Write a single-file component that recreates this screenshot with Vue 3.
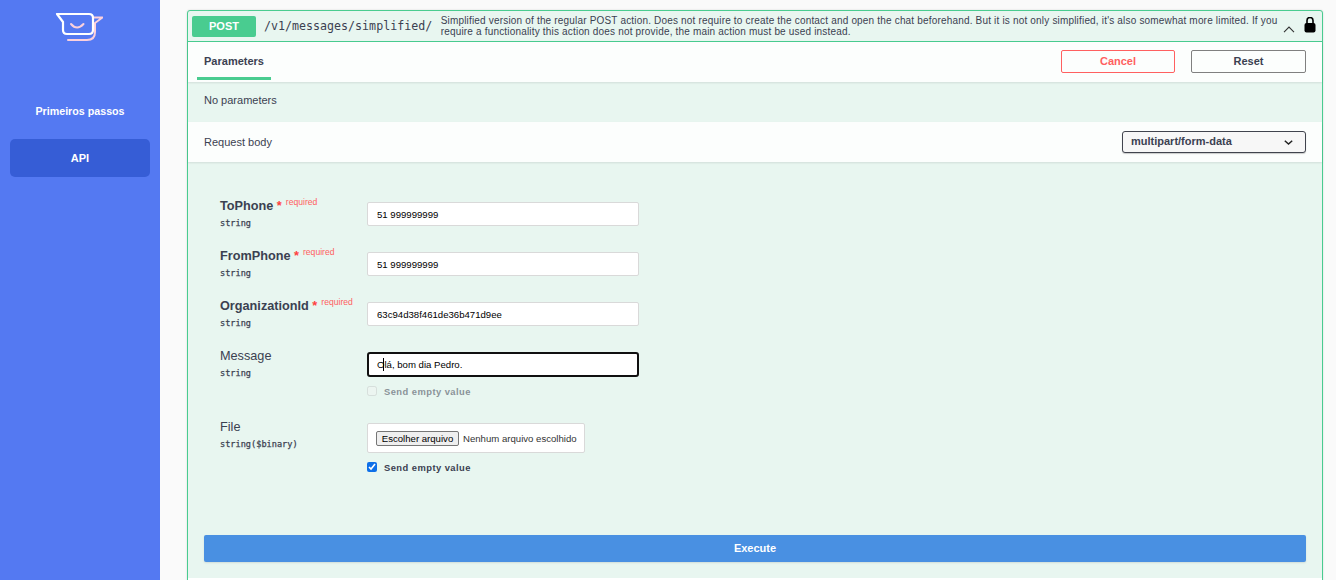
<script setup>
const fields = [
  { name: 'ToPhone', req: true, value: '51 999999999' },
  { name: 'FromPhone', req: true, value: '51 999999999' },
  { name: 'OrganizationId', req: true, value: '63c94d38f461de36b471d9ee' },
]
</script>

<template>
  <div class="page">
    <aside class="side">
      <svg class="logo" width="50" height="32" viewBox="0 0 50 32" fill="none" stroke-width="2" stroke-linecap="round" stroke-linejoin="round">
        <path d="M15 30H34Q42 30 42 22V13L49.5 7.5H40.5" stroke="#fbd0dc" />
        <path d="M4 4H36Q40 4 40 8V20Q40 24 36 24H14Q10 24 10 20V12Z" stroke="#fff" stroke-width="2.2" />
        <path d="M18 14Q24 21 30.5 14" stroke="#fbd0dc" />
      </svg>
      <a class="nav first">Primeiros passos</a>
      <a class="nav active">API</a>
    </aside>
    <main class="main">
      <section class="block">
        <header class="head">
          <span class="method">POST</span>
          <span class="path">/v1/messages/simplified/</span>
          <p class="desc">Simplified version of the regular POST action. Does not require to create the contact and open the chat beforehand. But it is not only simplified, it's also somewhat more limited. If you require a functionality this action does not provide, the main action must be used instead.</p>
          <svg class="chev" width="12" height="7" viewBox="0 0 12 7" fill="none" stroke="#333" stroke-width="1.1"><path d="M1 6.2 6 1l5 5.2" /></svg>
          <svg class="lock" width="12" height="16" viewBox="0 0 12 16"><path d="M3 7V3.5a3 3 0 0 1 6 0V7" fill="none" stroke="#000" stroke-width="1.6" /><rect x="0.5" y="6" width="11" height="9.5" rx="2" fill="#000" /></svg>
        </header>
        <div class="tabs">
          <div class="tab">Parameters</div>
          <div class="actions">
            <button class="btn cancel">Cancel</button>
            <button class="btn reset">Reset</button>
          </div>
        </div>
        <div class="noparams">No parameters</div>
        <div class="bodyhead">
          <span>Request body</span>
          <div class="select">
            <span class="seltext">multipart/form-data</span>
            <svg width="9" height="5" viewBox="0 0 9 5" fill="none" stroke="#222" stroke-width="1.5"><path d="M.8.8 4.5 4 8.2.8" /></svg>
          </div>
        </div>
        <div class="form">
          <div v-for="f in fields" :key="f.name" class="row">
            <div class="label">
              <div class="name strong">{{ f.name }}<span class="star"> *</span><sup class="req">required</sup></div>
              <div class="type">string</div>
            </div>
            <input class="input" :value="f.value" />
          </div>
          <div class="row msg">
            <div class="label">
              <div class="name">Message</div>
              <div class="type">string</div>
            </div>
            <div class="fieldcol">
              <div class="focus">
                <input class="input focused" value="Olá, bom dia Pedro." />
                <i class="caret"></i>
              </div>
              <label class="check off"><input type="checkbox" disabled />Send empty value</label>
            </div>
          </div>
          <div class="row file">
            <div class="label">
              <div class="name">File</div>
              <div class="type">string($binary)</div>
            </div>
            <div class="fieldcol">
              <div class="filebox"><button class="choose">Escolher arquivo</button><span>Nenhum arquivo escolhido</span></div>
              <label class="check"><input type="checkbox" checked />Send empty value</label>
            </div>
          </div>
          <button class="execute">Execute</button>
        </div>
        <div class="after"></div>
      </section>
    </main>
  </div>
</template>

<style scoped>
.page { display: flex; width: 1336px; height: 580px; overflow: hidden; background: #fafafa; font-family: "Liberation Sans", Arial, sans-serif; color: #3b4151; }
.side { width: 160px; flex: none; background: #5479f2; display: flex; flex-direction: column; align-items: center; }
.logo { margin: 10px 0 0 -4px; }
.nav { color: #fff; font-size: 10.7px; font-weight: 700; text-align: center; }
.first { margin-top: 61px; line-height: 16px; }
.active { width: 140px; height: 38px; margin-top: 20px; line-height: 38px; font-size: 11px; background: #365dd6; border-radius: 5px; }
.main { flex: 1; padding: 10px 13px 0 27px; min-width: 0; }
.block { border: 1px solid #49cc90; border-radius: 3px; background: #e8f6f0; box-shadow: 0 0 2px rgba(0,0,0,.15); }
.head { height: 30px; display: flex; align-items: center; padding: 0 6px 0 4px; border-bottom: 1px solid #49cc90; box-sizing: content-box; }
.method { width: 64px; height: 21px; flex: none; background: #49cc90; border-radius: 2px; color: #fff; font-size: 11px; font-weight: 700; text-align: center; line-height: 21px; }
.path { margin: 1px 0 0 8px; font: 500 11.65px/1 "DejaVu Sans Mono", monospace; color: #3b4151; flex: none; }
.desc { margin: 0 0 0 8.5px; width: 838px; flex: none; font-size: 10px; line-height: 11px; letter-spacing: .18px; }
.chev { margin: 6px 0 0 4px; flex: none; }
.lock { margin: 0 0 3px 9px; flex: none; }
.tabs { height: 40px; display: flex; justify-content: space-between; background: #fcfefd; box-shadow: 0 1px 2px rgba(0,0,0,.1); padding: 0 16px 0 9px; }
.tab { width: 74px; height: 38px; box-sizing: border-box; border-bottom: 3px solid #49cc90; font-size: 11px; font-weight: 700; line-height: 38px; text-align: center; }
.actions { display: flex; gap: 16px; padding-top: 8px; }
.btn { height: 23px; border-radius: 2px; background: transparent; font: 700 11px "Liberation Sans", sans-serif; padding: 0 0 2px; }
.cancel { width: 114px; border: 1px solid #ff6060; color: #ff6060; }
.reset { width: 115px; border: 1px solid #808080; color: #3b4151; }
.noparams { height: 39px; margin-top: 1px; padding-left: 16px; font-size: 11px; line-height: 35px; }
.bodyhead { height: 40px; display: flex; align-items: center; justify-content: space-between; padding: 0 16px; background: #fcfefd; box-shadow: 0 1px 2px rgba(0,0,0,.1); font-size: 11px; }
.select { width: 184px; height: 22px; box-sizing: border-box; border: 1px solid #41444e; border-radius: 3px; background: #f7f7f7; display: flex; align-items: center; justify-content: space-between; padding: 0 12px 0 8px; font-size: 11px; font-weight: 700; box-shadow: 0 1px 1px rgba(0,0,0,.2); }
.seltext { margin-bottom: 2px; }
.form { padding: 40px 16px 16px 32px; }
.row { display: flex; height: 50px; }
.label { width: 147px; flex: none; }
.name { font-size: 12.7px; line-height: 14px; margin-top: -3px; color: #3b4151; }
.strong { font-weight: 700; }
.star { color: #ff4040; }
.req { color: #ff6060; font-size: 8.6px; font-weight: 400; margin-left: 4px; position: relative; top: -4px; vertical-align: top; }
.type { font: 400 8.6px/12px "DejaVu Sans Mono", monospace; margin-top: 4px; -webkit-text-stroke: .25px #3b4151; }
.input { display: block; width: 272px; height: 24px; box-sizing: border-box; border: 1px solid #d9d9d9; border-radius: 2px; background: #fff; font: 9.6px "Liberation Sans", sans-serif; color: #000; padding: 0 9px; outline: none; }
.msg { height: 70px; }
.fieldcol { display: flex; flex-direction: column; }
.focus { position: relative; height: 25px; }
.focused { border: 2px solid #101010; border-radius: 3px; height: 25px; padding: 0 8px; }
.caret { position: absolute; left: 16px; top: 6px; width: 1px; height: 13px; background: #000; }
.check { display: flex; align-items: center; height: 14px; margin-top: 7px; font-size: 9.4px; font-weight: 700; letter-spacing: .45px; }
.check input { width: 10px; height: 10px; margin: 0 7px 0 0; accent-color: #0d6fe8; }
.off { opacity: .55; }
.file { height: 112px; margin-top: 1px; }
.filebox { width: 218px; height: 30px; box-sizing: border-box; border: 1px solid #d9d9d9; border-radius: 2px; background: #fff; display: flex; align-items: center; padding-left: 8px; font-size: 9.6px; color: #333; white-space: nowrap; }
.choose { width: 83px; height: 15px; box-sizing: border-box; padding: 0; margin-right: 4px; border: 1px solid #767676; border-radius: 2px; background: #efefef; font: 9.6px "Liberation Sans", sans-serif; color: #000; }
.file .check { margin-top: 7px; }
.execute { display: block; width: 1102px; height: 27px; margin-left: -16px; padding: 0 0 2px; border: 0; border-radius: 2px; background: #4990e2; color: #fff; font: 700 11px "Liberation Sans", sans-serif; box-shadow: 0 1px 2px rgba(0,0,0,.1); }
.after { height: 24px; background: #fff; }
</style>
